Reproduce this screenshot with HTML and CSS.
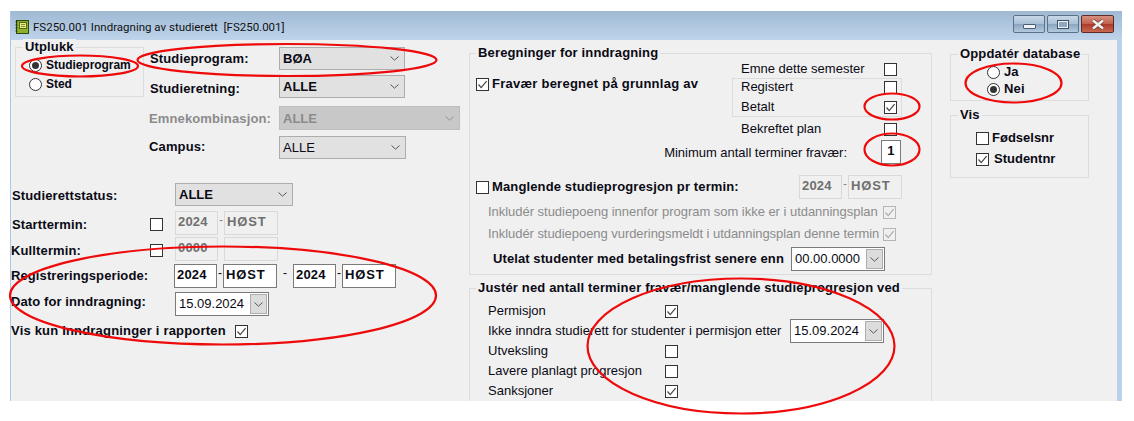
FILE: index.html
```html
<!DOCTYPE html>
<html lang="no">
<head>
<meta charset="utf-8">
<title>FS250.001 Inndragning av studierett</title>
<link rel="stylesheet" href="styles.css">
</head>
<body>
<svg class="defs" width="0" height="0" aria-hidden="true">
  <symbol id="tick" viewBox="0 0 13 13"><path d="M2.5 6.5 5.2 9.6 10.6 3.2" fill="none" stroke="currentColor" stroke-width="1.2"/></symbol>
  <symbol id="chev" viewBox="0 0 9 5"><path d="M.5.5 4.5 4.2 8.5.5" fill="none" stroke="#555" stroke-width="1"/></symbol>
</svg>
<div class="window">
  <header class="titlebar">
    <svg class="appicon" viewBox="0 0 14 14"><rect x="1.5" y="0.5" width="12" height="13" fill="#8fb02a" stroke="#2f4a10"/><path d="M.5 2h2M.5 5h2M.5 8h2M.5 11h2" stroke="#1d2b0a"/><rect x="4.5" y="2.5" width="7" height="6" fill="#f0e68c" stroke="#4d6a16"/><path d="M6 4.5h4M6 6.5h4" stroke="#7c8f2a"/></svg>
    <span class="title">FS250.001 Inndragning av studierett&nbsp; [FS250.001]</span>
    <div class="winbtns">
      <span class="wbtn"><i class="min"></i></span>
      <span class="wbtn"><i class="max"></i></span>
      <span class="wbtn close"><svg viewBox="0 0 16 11" width="16" height="11"><path d="M3 1.5 13 9.5M13 1.5 3 9.5" stroke="#6b3a32" stroke-width="4"/><path d="M3 1.5 13 9.5M13 1.5 3 9.5" stroke="#f4f0ee" stroke-width="2.6"/></svg></span>
    </div>
  </header>
  <main class="client">
    <section class="col-left">
      <div class="top">
        <div class="group utplukk">
          <div class="legend">Utplukk</div>
          <div class="radio-row first"><span class="radio on"></span><b>Studieprogram</b></div>
          <div class="radio-row"><span class="radio"></span><b>Sted</b></div>
        </div>
        <div class="studie">
          <div class="srow"><b class="slabel nudge">Studieprogram:</b><div class="select w126"><span>BØA</span><svg class="chev"><use href="#chev"/></svg></div></div>
          <div class="srow r2"><b class="slabel nudge">Studieretning:</b><div class="select w126"><span>ALLE</span><svg class="chev"><use href="#chev"/></svg></div></div>
          <div class="srow r3"><b class="slabel off">Emnekombinasjon:</b><div class="select w181 dis"><span>ALLE</span><svg class="chev"><use href="#chev"/></svg></div></div>
          <div class="srow r4"><b class="slabel">Campus:</b><div class="select w127 plain"><span>ALLE</span><svg class="chev"><use href="#chev"/></svg></div></div>
        </div>
      </div>
      <div class="lower">
        <div class="lrow status"><b class="llabel">Studierettstatus:</b><i class="cbslot"></i><div class="select w118"><span>ALLE</span><svg class="chev"><use href="#chev"/></svg></div></div>
        <div class="lrow start"><b class="llabel">Starttermin:</b><span class="cbslot"><span class="cb"></span></span><span class="inp y dis">2024</span><span class="sep off">-</span><span class="inp t dis">HØST</span></div>
        <div class="lrow kull"><b class="llabel">Kulltermin:</b><span class="cbslot"><span class="cb"></span></span><span class="inp y dis">0000</span><span class="sep off">-</span><span class="inp t dis"></span></div>
        <div class="lrow reg"><b class="llabel">Registreringsperiode:</b><i class="cbslot"></i><span class="inp y on">2024</span><span class="sep">-</span><span class="inp t on">HØST</span><span class="sep wide">-</span><span class="inp y on">2024</span><span class="sep">-</span><span class="inp t on">HØST</span></div>
        <div class="lrow dato"><b class="llabel">Dato for inndragning:</b><i class="cbslot"></i><div class="date"><span>15.09.2024</span><span class="dbtn"><svg class="chev"><use href="#chev"/></svg></span></div></div>
        <div class="lrow vis"><b>Vis kun Inndragninger i rapporten</b><span class="cb"><svg><use href="#tick"/></svg></span></div>
      </div>
    </section>

    <section class="col-mid">
      <div class="group beregn">
        <div class="legend">Beregninger for inndragning</div>
        <div class="split">
          <div class="fravaer"><span class="cb"><svg><use href="#tick"/></svg></span><b>Fravær beregnet på grunnlag av</b></div>
          <div class="checks">
            <div class="crow pad"><span>Emne dette semester</span><span class="cb"></span></div>
            <div class="inner">
              <div class="crow"><span>Registert</span><span class="cb"></span></div>
              <div class="crow"><span>Betalt</span><span class="cb"><svg><use href="#tick"/></svg></span></div>
            </div>
            <div class="crow pad bek"><span>Bekreftet plan</span><span class="cb"></span></div>
          </div>
        </div>
        <div class="minrow"><span>Minimum antall terminer fravær:</span><span class="inp num on">1</span></div>
        <div class="mang"><span class="cb"></span><b class="manglabel">Manglende studieprogresjon pr termin:</b><span class="inp y dis">2024</span><span class="sep off">-</span><span class="inp t dis">HØST</span></div>
        <div class="ink one"><span class="off">Inkludér studiepoeng innenfor program som ikke er i utdanningsplan</span><span class="cb dis"><svg><use href="#tick"/></svg></span></div>
        <div class="ink two"><span class="off">Inkludér studiepoeng vurderingsmeldt i utdanningsplan denne termin</span><span class="cb dis"><svg><use href="#tick"/></svg></span></div>
        <div class="utelat"><b>Utelat studenter med betalingsfrist senere enn</b><div class="date"><span>00.00.0000</span><span class="dbtn"><svg class="chev"><use href="#chev"/></svg></span></div></div>
      </div>
      <div class="group juster">
        <div class="legend">Justér ned antall terminer fravær/manglende studieprogresjon ved</div>
        <div class="jrow first"><span class="jlabel">Permisjon</span><span class="cb"><svg><use href="#tick"/></svg></span></div>
        <div class="jrow"><span class="jtext">Ikke inndra studierett for studenter i permisjon etter</span><div class="date"><span>15.09.2024</span><span class="dbtn"><svg class="chev"><use href="#chev"/></svg></span></div></div>
        <div class="jrow"><span class="jlabel">Utveksling</span><span class="cb"></span></div>
        <div class="jrow"><span class="jlabel">Lavere planlagt progresjon</span><span class="cb"></span></div>
        <div class="jrow"><span class="jlabel">Sanksjoner</span><span class="cb"><svg><use href="#tick"/></svg></span></div>
      </div>
    </section>

    <section class="col-right">
      <div class="group oppdater">
        <div class="legend">Oppdatér database</div>
        <div class="orow first"><span class="radio"></span><b>Ja</b></div>
        <div class="orow"><span class="radio on"></span><b>Nei</b></div>
      </div>
      <div class="group visgrp">
        <div class="legend">Vis</div>
        <div class="vrow first"><span class="cb"></span><b>Fødselsnr</b></div>
        <div class="vrow"><span class="cb"><svg><use href="#tick"/></svg></span><b class="stud">Studentnr</b></div>
      </div>
    </section>
  </main>
</div>
<svg class="marks" viewBox="0 0 1134 421" aria-hidden="true">
  <ellipse cx="80" cy="66" rx="58" ry="10.5"/>
  <ellipse cx="287" cy="60" rx="149.5" ry="16"/>
  <ellipse cx="223" cy="295.5" rx="213" ry="49"/>
  <ellipse cx="892" cy="106.5" rx="27.5" ry="13"/>
  <ellipse cx="892" cy="149.5" rx="27.5" ry="16"/>
  <ellipse cx="741" cy="346" rx="153.5" ry="67.5"/>
  <ellipse cx="1013.5" cy="83" rx="48" ry="19.5"/>
</svg>
</body>
</html>
```

FILE: styles.css
```css
* { box-sizing: border-box; }
html, body { margin: 0; padding: 0; background: #fff; }
body { width: 1134px; height: 421px; overflow: hidden; position: relative; font: 13px/16px "Liberation Sans", Arial, sans-serif; color: #0a0a14; }
b { font-weight: 700; letter-spacing: .13px; }
.defs { position: absolute; }

.window { margin: 11px 12px 0 10px; height: 390px; display: flex; flex-direction: column; overflow: hidden; background: #b9d1ea; border-left: 1px solid #a9c8ea; }
.titlebar { height: 29px; flex: none; display: flex; align-items: center; padding-left: 4px; background: linear-gradient(#a0b9d3, #bdd4eb); }
.appicon { width: 14px; height: 14px; margin: 2px 4px 0 0; }
.title { font: 11.5px/16px Roboto, "Noto Sans", sans-serif; color: #111; margin-top: 2px; }
.winbtns { margin-left: auto; display: flex; gap: 2px; margin-right: 8px; margin-top: -3px; }
.wbtn { width: 32px; height: 18px; border: 1px solid #5c7187; border-radius: 2px; background: linear-gradient(#c8d8e8 0, #a9c0d6 50%, #8aa5c0 51%, #b3cade 100%); display: flex; align-items: center; justify-content: center; }
.min { width: 13px; height: 5px; background: #eef3f8; border: 1px solid #4a5d72; margin-top: 4px; border-radius: 1px; }
.max { width: 12px; height: 9px; border: 1px solid #3e5064; box-shadow: inset 0 0 0 1px #eef3f8; background: #8fa7bf; }
.close { background: linear-gradient(#d6907f 0, #c2604c 50%, #ab3a28 51%, #c96a52 100%); border-color: #5e2a22; width: 33px; }

.client { flex: 1; display: flex; background: #f0f0f0; margin-right: 5px; min-height: 0; }
.col-left { width: 458px; flex: none; }
.col-mid { width: 463px; flex: none; }
.col-right { width: 139px; flex: none; margin-left: 18px; }

.group { border: 1px solid #dcdcdc; position: relative; }
.legend { display: table; margin: -9px 0 0 7px; padding: 0 2px; background: #f0f0f0; font-weight: 700; letter-spacing: .15px; line-height: 16px; height: 16px; }

.off { color: #8b8b8b; }
.cb { width: 13px; height: 13px; flex: none; display: block; background: #fff; border: 1px solid #333; color: #444; position: relative; }
.cb svg { position: absolute; left: -1px; top: -1px; width: 13px; height: 13px; }
.cb.dis { border-color: #b5b5b5; color: #aaa; background: #f0f0f0; }
.radio { width: 13px; height: 13px; flex: none; border: 1px solid #333; border-radius: 50%; background: #fff; position: relative; }
.radio.on::after { content: ""; position: absolute; inset: 2px; border-radius: 50%; background: #333; }

.select { height: 23px; border: 1px solid #adadad; background: #e1e1e1; display: flex; align-items: center; justify-content: space-between; padding: 0 5px 0 3px; font-weight: 700; }
.select span { padding-top: 1px; }
.select.plain { font-weight: 400; }
.w126 { width: 126px; } .w127 { width: 127px; } .w181 { width: 181px; height: 24px; } .w118 { width: 118px; }
.select.dis { background: #c8c8c8; color: #8b8b8b; border-color: #bdbdbd; font-weight: 700; }
.select.dis .chev { opacity: .45; }
.chev { width: 9px; height: 5px; display: block; }

.inp { height: 24px; display: block; flex: none; font-weight: 700; line-height: 20px; padding-left: 2px; letter-spacing: .2px; }
.inp.y { width: 43px; } .inp.t { width: 54px; letter-spacing: .9px; }
.inp.on { background: #fff; border: 1px solid #7a7a7a; }
.inp.dis { border: 1px solid #d9d9d9; color: #6f6f6f; background: #f0f0f0; }
.sep { width: 6px; text-align: center; flex: none; line-height: 18px; align-self: flex-start; font-size: 12px; }
.sep.wide { width: 16px; }
.inp.num { width: 20px; text-align: center; padding: 0; }

.date { width: 94px; height: 24px; background: #fff; border: 1px solid #7a7a7a; display: flex; justify-content: space-between; align-items: center; padding: 0 1px 0 3px; flex: none; }
.dbtn { width: 17px; height: 20px; background: #dcdcdc; border: 1px solid #adadad; display: flex; align-items: center; justify-content: center; }

/* left column */
.top { display: flex; padding-top: 7px; }
.utplukk { width: 129px; height: 50px; margin-left: 4px; }
.radio-row { display: flex; align-items: center; height: 16px; margin-left: 13px; gap: 4px; margin-top: 3px; font-size: 12px; }
.radio-row b { letter-spacing: -.05px; }
.radio-row.first { margin-top: 2px; }
.studie { margin-left: 5px; }
.srow { display: flex; align-items: flex-start; }
.slabel { width: 130px; flex: none; margin-top: 4px; }
.slabel.nudge { padding-left: 1px; }
.r2 { margin-top: 5px; } .r2 .slabel { margin-top: 6px; }
.r3 { margin-top: 8px; } .r3 .slabel { margin-top: 5px; }
.r4 { margin-top: 6px; } .r4 .slabel { margin-top: 3px; }

.lower { padding: 24px 0 0 1px; }
.lrow { display: flex; align-items: flex-start; }
.llabel { width: 138px; flex: none; margin-top: 4px; }
.status .llabel { margin-top: 5px; }
.cbslot { width: 25px; flex: none; display: block; }
.start { margin-top: 5px; } .start .llabel { margin-top: 6px; } .start .cbslot { padding-top: 7px; }
.kull { margin-top: 2px; } .kull .llabel { margin-top: 6px; margin-left: -1px; width: 139px; } .kull .cbslot { padding-top: 7px; }
.reg { margin-top: 3px; margin-left: -1px; }
.reg .cbslot { width: 24px; }
.reg .llabel, .dato .llabel { width: 139px; letter-spacing: .1px; }
.reg .llabel { margin-top: 4px; }
.dato { margin-top: 4px; margin-left: -1px; } .dato .llabel { margin-top: 2px; }
.vis { margin-top: 7px; height: 16px; align-items: center; gap: 9px; margin-left: -1px; }
.vis b { letter-spacing: .19px; }

/* middle column */
.beregn { height: 222px; margin-top: 13px; }
.beregn .legend { margin-left: 6px; }
.split { display: flex; justify-content: space-between; }
.fravaer { display: flex; gap: 3px; align-items: center; margin: 15px 0 0 6px; height: 16px; }
.fravaer b { letter-spacing: .25px; }
.checks { width: 170px; margin-right: 29px; margin-top: -1px; }
.crow { display: flex; justify-content: space-between; align-items: center; height: 16px; padding: 0 4px 0 8px; }
.crow.pad { padding-left: 9px; padding-right: 5px; }
.crow.pad:first-child { margin-top: 1px; }
.inner { border: 1px solid #dcdcdc; height: 39px; margin-top: 1px; display: flex; flex-direction: column; gap: 3px; }
.inner .crow + .crow { margin-top: 1px; }
.bek { margin-top: 4px; }
.minrow { display: flex; justify-content: flex-end; align-items: center; gap: 34px; margin: 3px 30px 0 0; }
.minrow span:first-child { padding-top: 2px; letter-spacing: -.02px; }
.mang { display: flex; align-items: center; height: 24px; margin: 11px 29px 0 6px; }
.manglabel { margin-left: 3px; width: 307px; }
.mang .sep { margin-top: 0; }
.ink { display: flex; align-items: center; justify-content: space-between; height: 16px; margin-left: 18px; width: 408px; letter-spacing: -.03px; }
.one { margin-top: 5px; } .two { margin-top: 6px; letter-spacing: -.05px; }
.utelat { display: flex; align-items: center; height: 24px; margin: 5px 0 0 23px; gap: 6px; }
.utelat b { letter-spacing: .09px; white-space: nowrap; }
.utelat .date { margin-left: auto; margin-right: 46px; }

.juster { margin-top: 13px; height: 130px; }
.juster .legend { letter-spacing: .17px; margin-left: 6px; }
.jrow { display: flex; align-items: center; height: 20px; margin-left: 18px; }
.jrow.first { margin-top: 5px; }
.jlabel { width: 177px; flex: none; }
.jtext { width: 302px; flex: none; }

/* right column */
.oppdater { height: 47px; margin-top: 14px; }
.orow { display: flex; align-items: center; gap: 4px; height: 16px; margin-left: 36px; }
.orow.first { margin-top: 2px; margin-bottom: 1px; }
.visgrp { height: 63px; margin-top: 14px; }
.vrow { display: flex; align-items: center; gap: 3px; height: 16px; margin-left: 25px; margin-top: 5px; }
.vrow.first { margin-top: 7px; }
.vrow b { letter-spacing: 0; }
.stud { margin-left: 2px; }

.marks { position: absolute; left: 0; top: 0; width: 1134px; height: 421px; pointer-events: none; }
.marks ellipse { fill: none; stroke: #ee0a0a; stroke-width: 2.2; }
```
